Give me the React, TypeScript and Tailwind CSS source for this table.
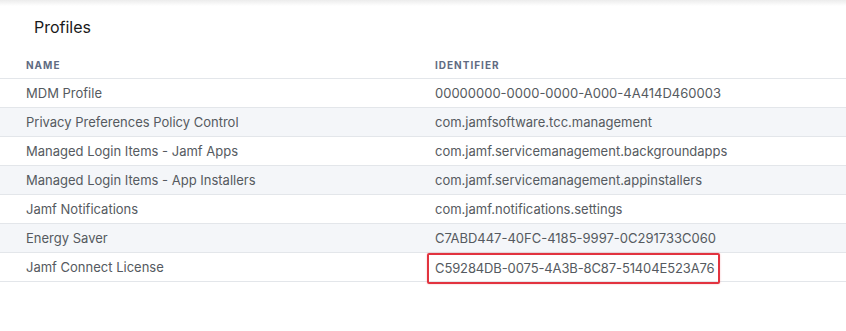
import React from "react";

const rows: [string, string][] = [
  ["MDM Profile", "00000000-0000-0000-A000-4A414D460003"],
  ["Privacy Preferences Policy Control", "com.jamfsoftware.tcc.management"],
  ["Managed Login Items - Jamf Apps", "com.jamf.servicemanagement.backgroundapps"],
  ["Managed Login Items - App Installers", "com.jamf.servicemanagement.appinstallers"],
  ["Jamf Notifications", "com.jamf.notifications.settings"],
  ["Energy Saver", "C7ABD447-40FC-4185-9997-0C291733C060"],
  ["Jamf Connect License", "C59284DB-0075-4A3B-8C87-51404E523A76"],
];

export default function App() {
  return (
    <div
      className="w-[846px] h-[331px] bg-white relative overflow-hidden"
      style={{ fontFamily: 'Inter, "Noto Sans", sans-serif' }}
    >
      <div className="h-[6px] bg-gradient-to-b from-[#ececec] to-white" />
      <div className="pl-[34px] pt-[9px] h-[46px] text-[16px] text-[#1a1a1a]">Profiles</div>
      <div className="flex h-[27px] items-center pt-[1px] border-b border-[#e3e6ea] text-[10px] font-bold tracking-[1px] text-[#5f6b82]">
        <div className="w-[435px] pl-[26px]">NAME</div>
        <div>IDENTIFIER</div>
      </div>
      {rows.map(([name, id], i) => (
        <div
          key={i}
          className={`flex h-[29px] items-center pt-[1px] border-b border-[#e3e6ea] text-[13px] text-[#555a60] whitespace-nowrap ${
            i % 2 === 1 ? "bg-[#f4f6f9]" : "bg-white"
          }`}
        >
          <div className="w-[435px] shrink-0 pl-[26px]">{name}</div>
          {i === 6 ? (
            <div className="ml-[-8px] h-[31px] w-[293px] shrink-0 pl-[6px] flex items-center border-2 border-[#e2333f] rounded-[2px] mt-[2px] tracking-[-0.12px] shadow-[0_0_2px_rgba(226,51,63,0.35)]">
              {id}
            </div>
          ) : (
            <div>{id}</div>
          )}
        </div>
      ))}
    </div>
  );
}
